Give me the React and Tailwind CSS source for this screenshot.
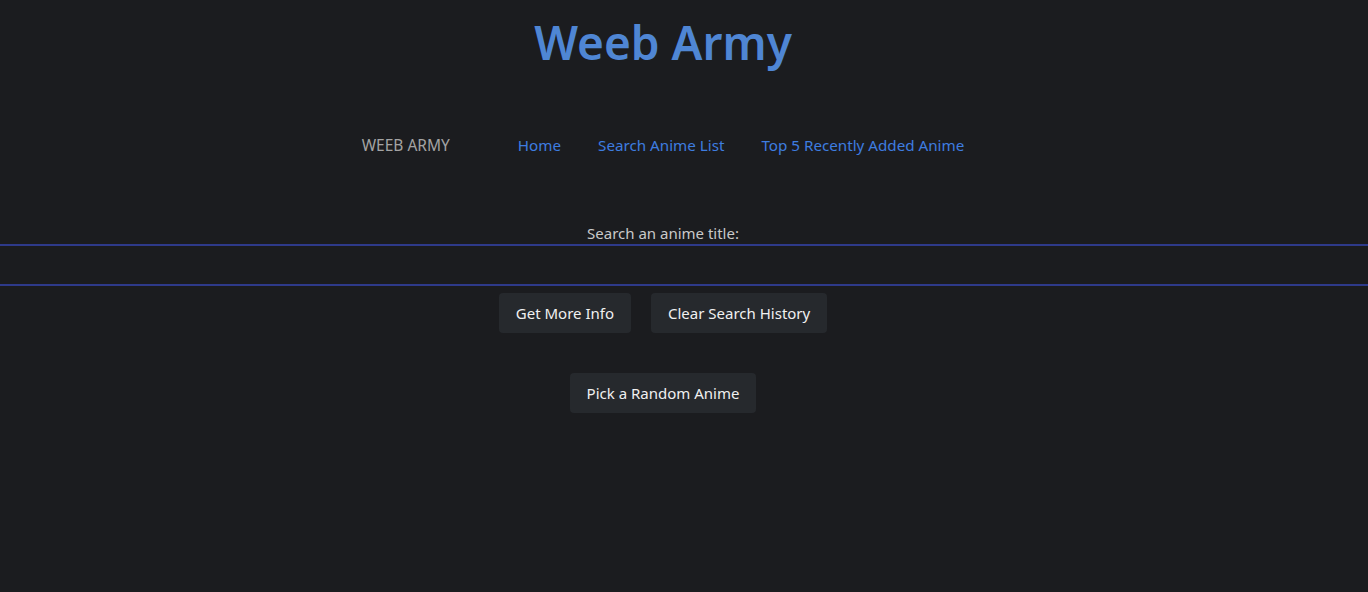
export default function App() {
  const font = { fontFamily: '"Noto Sans", "Open Sans", sans-serif' };
  return (
    <div className="min-h-[592px] w-full bg-[#1b1c1f]" style={font}>
      <div className="w-[1326px]">
        <h1 className="pt-[8px] text-center text-[46px] font-semibold leading-[68px] text-[#4f86d4]">Weeb Army</h1>
        <nav className="mt-[58px] flex items-center justify-center">
          <span className="text-[15.5px] text-[#a3a3a3]">WEEB ARMY</span>
          <div className="ml-[68px] flex gap-[37px] text-[15.2px] text-[#3e7de0]">
            <a>Home</a>
            <a>Search Anime List</a>
            <a>Top 5 Recently Added Anime</a>
          </div>
        </nav>
        <div className="mt-[65px] text-center text-[15px] leading-[22px] text-[#c9c9c9]">Search an anime title:</div>
      </div>
      <div className="h-[42px] w-full border-y-2 border-[#2e3a8a] bg-[#1b1c1f]"></div>
      <div className="w-[1326px]">
        <div className="mt-[7px] flex justify-center gap-[20px]">
          <button className="h-[40px] rounded-[4px] bg-[#26292d] px-[17px] text-[15px] text-[#f0f0f0]">Get More Info</button>
          <button className="h-[40px] rounded-[4px] bg-[#26292d] px-[17px] text-[15px] text-[#f0f0f0]">Clear Search History</button>
        </div>
        <div className="mt-[40px] flex justify-center">
          <button className="h-[40px] rounded-[4px] bg-[#26292d] px-[17px] text-[15px] text-[#f0f0f0]">Pick a Random Anime</button>
        </div>
      </div>
    </div>
  );
}
